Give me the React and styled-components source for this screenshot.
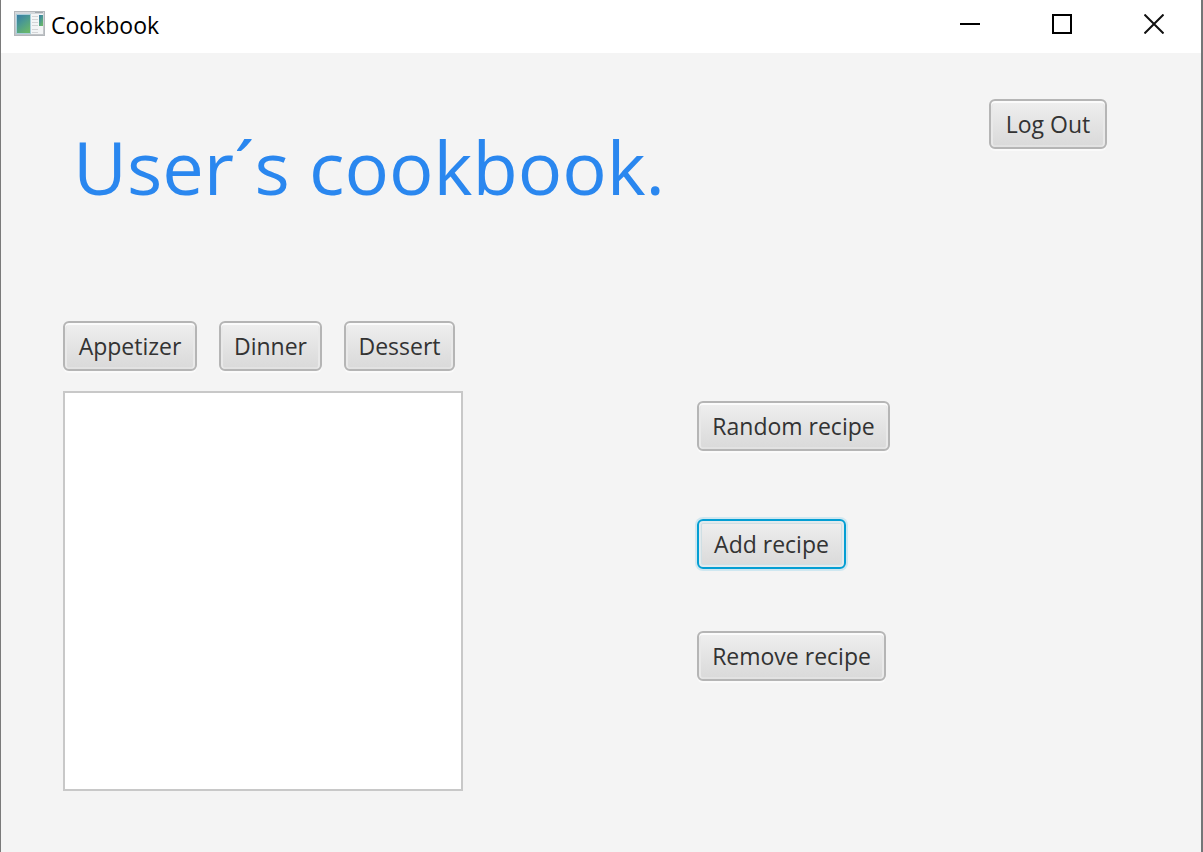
import React from "react";
import styled, { createGlobalStyle } from "styled-components";

const GlobalStyle = createGlobalStyle`
  *, *::before, *::after { box-sizing: border-box; }
  html, body, #root { height: 100%; }
  body {
    margin: 0;
    background: #f4f4f4;
    font-family: "Segoe UI", "Open Sans", "Noto Sans", sans-serif;
  }
`;

const Window = styled.div`
  display: flex;
  flex-direction: column;
  min-height: 100%;
  background: #f4f4f4;
  border-left: 1px solid #7a7a7a;
  border-right: 2px solid #747678;
`;

const TitleBar = styled.header`
  display: flex;
  align-items: flex-start;
  justify-content: space-between;
  height: 53px;
  padding: 0 1px 0 12px;
  background: #ffffff;
`;

const AppName = styled.div`
  display: flex;
  align-items: center;
  gap: 4px;
  height: 50px;
  color: #000000;
  font-size: 23px;
  line-height: 32px;
`;

const WindowControls = styled.div`
  display: flex;
`;

const ControlButton = styled.button`
  display: flex;
  align-items: center;
  justify-content: center;
  width: 92px;
  height: 48px;
  padding: 0;
  border: 0;
  background: transparent;
`;

const Content = styled.main`
  flex: 1;
  padding: 46px 94px 60px 62px;
`;

const Header = styled.div`
  display: flex;
  align-items: flex-start;
  justify-content: space-between;
  height: 222px;
`;

const Heading = styled.h1`
  margin: 14px 0 0 10px;
  color: #2a87ef;
  font-size: 74px;
  font-weight: 400;
  line-height: 108px;
  white-space: nowrap;
`;

const Columns = styled.div`
  display: grid;
  grid-template-columns: 610fr 410fr;
  column-gap: 24px;
`;

const RecipeBrowser = styled.section`
  display: flex;
  flex-direction: column;
  gap: 20px;
`;

const Categories = styled.div`
  display: flex;
  gap: 22px;
`;

const Actions = styled.section`
  display: grid;
  grid-template-rows: 118px 112px 50px;
  align-content: start;
  justify-items: start;
  padding-top: 80px;
`;

const Button = styled.button`
  flex: none;
  width: ${(p) => p.$width}px;
  height: 50px;
  padding: 0;
  border: 2px solid #b5b5b5;
  border-radius: 6px;
  background: linear-gradient(#efefef, #d9d9d9);
  box-shadow:
    inset 0 2px 0 #fbfbfb,
    inset 2px 0 0 #e9e9e9,
    inset -2px 0 0 #e9e9e9,
    inset 0 -2px 0 #e2e2e2,
    0 2px 0 #fafafa;
  color: #333333;
  font-family: inherit;
  font-size: 23px;
  line-height: 32px;
  white-space: nowrap;

  &:focus {
    outline: none;
    border-color: #039ed3;
    box-shadow:
      inset 0 0 0 2px #e2eaed,
      inset 0 0 0 3px #cfdfe4,
      0 0 0 2px #cfe7f0;
  }
`;

const RecipeList = styled.ul`
  width: 400px;
  height: 400px;
  margin: 0;
  padding: 0;
  list-style: none;
  background: #ffffff;
  border: 2px solid #c8c8c8;
`;

function AppIcon() {
  return (
    <svg width="34" height="28" viewBox="0 0 34 28" aria-hidden="true">
      <defs>
        <linearGradient id="pane" x1="0" y1="0" x2="0.6" y2="1">
          <stop offset="0" stopColor="#3579a8" />
          <stop offset="0.5" stopColor="#4b9a91" />
          <stop offset="1" stopColor="#67b56c" />
        </linearGradient>
        <linearGradient id="frame" x1="0" y1="0" x2="0" y2="1">
          <stop offset="0" stopColor="#d5d9dd" />
          <stop offset="1" stopColor="#c0c3c6" />
        </linearGradient>
      </defs>
      <rect x="1.5" y="0.5" width="30" height="24" fill="url(#frame)" stroke="#b3b7bb" />
      <rect x="3" y="3" width="27" height="20" fill="#f3f5f6" />
      <path d="M22 1.5h8" stroke="#a2a9af" />
      <rect x="3.5" y="3.5" width="14" height="19" fill="url(#pane)" stroke="#a9cfdb" />
      <path d="M19 5.5h6M19 8.5h6M19 11.5h6M19 14.5h6M19 18.5h6M19 21.5h6" stroke="#d3d5d7" />
      <rect x="26" y="4" width="4" height="11" fill="url(#pane)" />
    </svg>
  );
}

function App() {
  return (
    <>
      <GlobalStyle />
      <Window>
        <TitleBar>
          <AppName>
            <AppIcon />
            <span>Cookbook</span>
          </AppName>
          <WindowControls>
            <ControlButton aria-label="Minimize">
              <svg width="20" height="20" viewBox="0 0 20 20" aria-hidden="true">
                <path d="M0 10h20" stroke="#000" strokeWidth="2" />
              </svg>
            </ControlButton>
            <ControlButton aria-label="Maximize">
              <svg width="20" height="20" viewBox="0 0 20 20" aria-hidden="true">
                <rect x="1" y="1" width="18" height="18" fill="none" stroke="#000" strokeWidth="2" />
              </svg>
            </ControlButton>
            <ControlButton aria-label="Close">
              <svg width="20" height="20" viewBox="0 0 20 20" aria-hidden="true">
                <path d="M.5.5l19 19M19.5.5l-19 19" stroke="#111" strokeWidth="2" />
              </svg>
            </ControlButton>
          </WindowControls>
        </TitleBar>
        <Content>
          <Header>
            <Heading>User´s cookbook.</Heading>
            <Button $width={118}>Log Out</Button>
          </Header>
          <Columns>
            <RecipeBrowser>
              <Categories>
                <Button $width={134}>Appetizer</Button>
                <Button $width={103}>Dinner</Button>
                <Button $width={111}>Dessert</Button>
              </Categories>
              <RecipeList aria-label="Recipes" />
            </RecipeBrowser>
            <Actions>
              <Button $width={193}>Random recipe</Button>
              <Button $width={149} autoFocus>Add recipe</Button>
              <Button $width={189}>Remove recipe</Button>
            </Actions>
          </Columns>
        </Content>
      </Window>
    </>
  );
}

export default App;
